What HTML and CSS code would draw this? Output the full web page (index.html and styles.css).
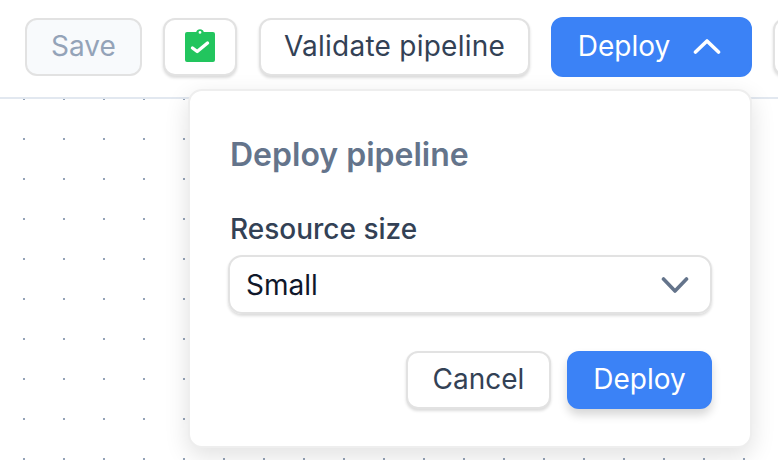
FILE: index.html
```html
<!DOCTYPE html>
<html lang="en">

<head>
    <meta charset="UTF-8" />
    <meta name="viewport" content="width=device-width, initial-scale=1.0" />
    <title>Deploy pipeline</title>
    <link rel="stylesheet" href="styles.css">
</head>

<body>
    <div class="toolbar">
        <button class="btn btn-disabled btn-save">Save</button>
        <button class="btn btn-icon" aria-label="Valid">
            <svg width="30" height="33" viewBox="0 0 30 33">
                <path fill="#22c55e" fill-rule="evenodd" d="M2 3h9.2a4 4 0 0 1 7.6 0H28a2 2 0 0 1 2 2v26a2 2 0 0 1-2 2H2a2 2 0 0 1-2-2V5a2 2 0 0 1 2-2zM15 2a1.4 1.4 0 1 0 0 2.8A1.4 1.4 0 0 0 15 2z" />
                <path fill="none" stroke="#fff" stroke-width="3.4" stroke-linecap="round" stroke-linejoin="round" d="M7.5 19l4.7 3.5L22.5 14" />
            </svg>
        </button>
        <button class="btn btn-validate">Validate pipeline</button>
        <button class="btn btn-primary btn-deploy">
            Deploy
            <svg width="28" height="16" viewBox="0 0 28 16">
                <path fill="none" stroke="#fff" stroke-width="3.6" stroke-linecap="round" stroke-linejoin="round" d="M2.5 14L14 3l11.5 11" />
            </svg>
        </button>
        <button class="btn btn-next"></button>
    </div>

    <div class="canvas"></div>

    <div class="popup">
        <h2 class="popup-title">Deploy pipeline</h2>
        <div class="field-label">Resource size</div>
        <div class="select">
            <span>Small</span>
            <svg width="28" height="18" viewBox="0 0 28 18">
                <path fill="none" stroke="#64748b" stroke-width="3.6" stroke-linecap="round" stroke-linejoin="round" d="M2.5 3L14 15 25.5 3" />
            </svg>
        </div>
        <div class="popup-actions">
            <button class="btn btn-cancel">Cancel</button>
            <button class="btn btn-primary btn-confirm">Deploy</button>
        </div>
    </div>
</body>

</html>
```

FILE: styles.css
```css
html, body {
    height: 100%;
}

body {
    margin: 0;
    font-family: Inter, "Liberation Sans", sans-serif;
    background-color: #ffffff;
    overflow: hidden;
    position: relative;
    display: flex;
    flex-direction: column;
}

.toolbar {
    display: flex;
    align-items: center;
    gap: 21px;
    height: 93px;
    padding-left: 25px;
    padding-bottom: 4px;
    border-bottom: 2px solid #e2e8f0;
    flex-shrink: 0;
    overflow: hidden;
}

.canvas {
    flex: 1;
    background-image: radial-gradient(circle, #94a3b8 1px, transparent 1.2px);
    background-size: 40px 40px;
    background-position: 4px -20px;
}

.btn {
    font-family: inherit;
    font-size: 28px;
    height: 58px;
    padding: 0 0 2px;
    border: 2px solid #e2e2e2;
    border-radius: 12px;
    background-color: #ffffff;
    color: #334155;
    box-shadow: 0 2px 3px rgba(0, 0, 0, 0.14);
    flex-shrink: 0;
}

.btn-disabled {
    background-color: #f8fafc;
    color: #94a3b8;
    box-shadow: none;
}

.btn-save {
    width: 117px;
}

.btn-icon {
    width: 74px;
    display: flex;
    align-items: center;
    justify-content: center;
}

.btn-validate {
    width: 271px;
    margin-left: 1px;
    letter-spacing: 0.25px;
}

.btn-primary {
    background-color: #3b82f6;
    border-color: #3b82f6;
    color: #ffffff;
    box-shadow: none;
}

.btn-deploy {
    width: 201px;
    height: 60px;
    padding: 0 4px 2px 0;
    display: flex;
    align-items: center;
    justify-content: center;
    gap: 23px;
}

.btn-next {
    width: 60px;
}

.popup {
    position: absolute;
    left: 188px;
    top: 89px;
    width: 564px;
    height: 359px;
    box-sizing: border-box;
    padding: 44px 38px 0 40px;
    background-color: #ffffff;
    border: 2px solid #eeeeee;
    border-radius: 14px;
    box-shadow: 0 8px 24px rgba(0, 0, 0, 0.12);
}

.popup-title {
    margin: 0;
    font-size: 32px;
    line-height: 40px;
    font-weight: 600;
    color: #64748b;
}

.field-label {
    margin-top: 36px;
    font-size: 28px;
    line-height: 36px;
    font-weight: 450;
    color: #334155;
}

.select {
    display: flex;
    align-items: center;
    justify-content: space-between;
    margin-top: 8px;
    margin-left: -2px;
    height: 59px;
    box-sizing: border-box;
    padding: 0 21px 0 16px;
    font-size: 28px;
    color: #0f172a;
    border: 2px solid #e2e2e2;
    border-radius: 14px;
    box-shadow: 0 2px 3px rgba(0, 0, 0, 0.14);
}

.popup-actions {
    display: flex;
    justify-content: flex-end;
    gap: 16px;
    margin-top: 37px;
}

.btn-cancel {
    width: 145px;
}

.btn-confirm {
    width: 145px;
    box-shadow: 0 6px 10px rgba(0, 0, 0, 0.16);
}
```
